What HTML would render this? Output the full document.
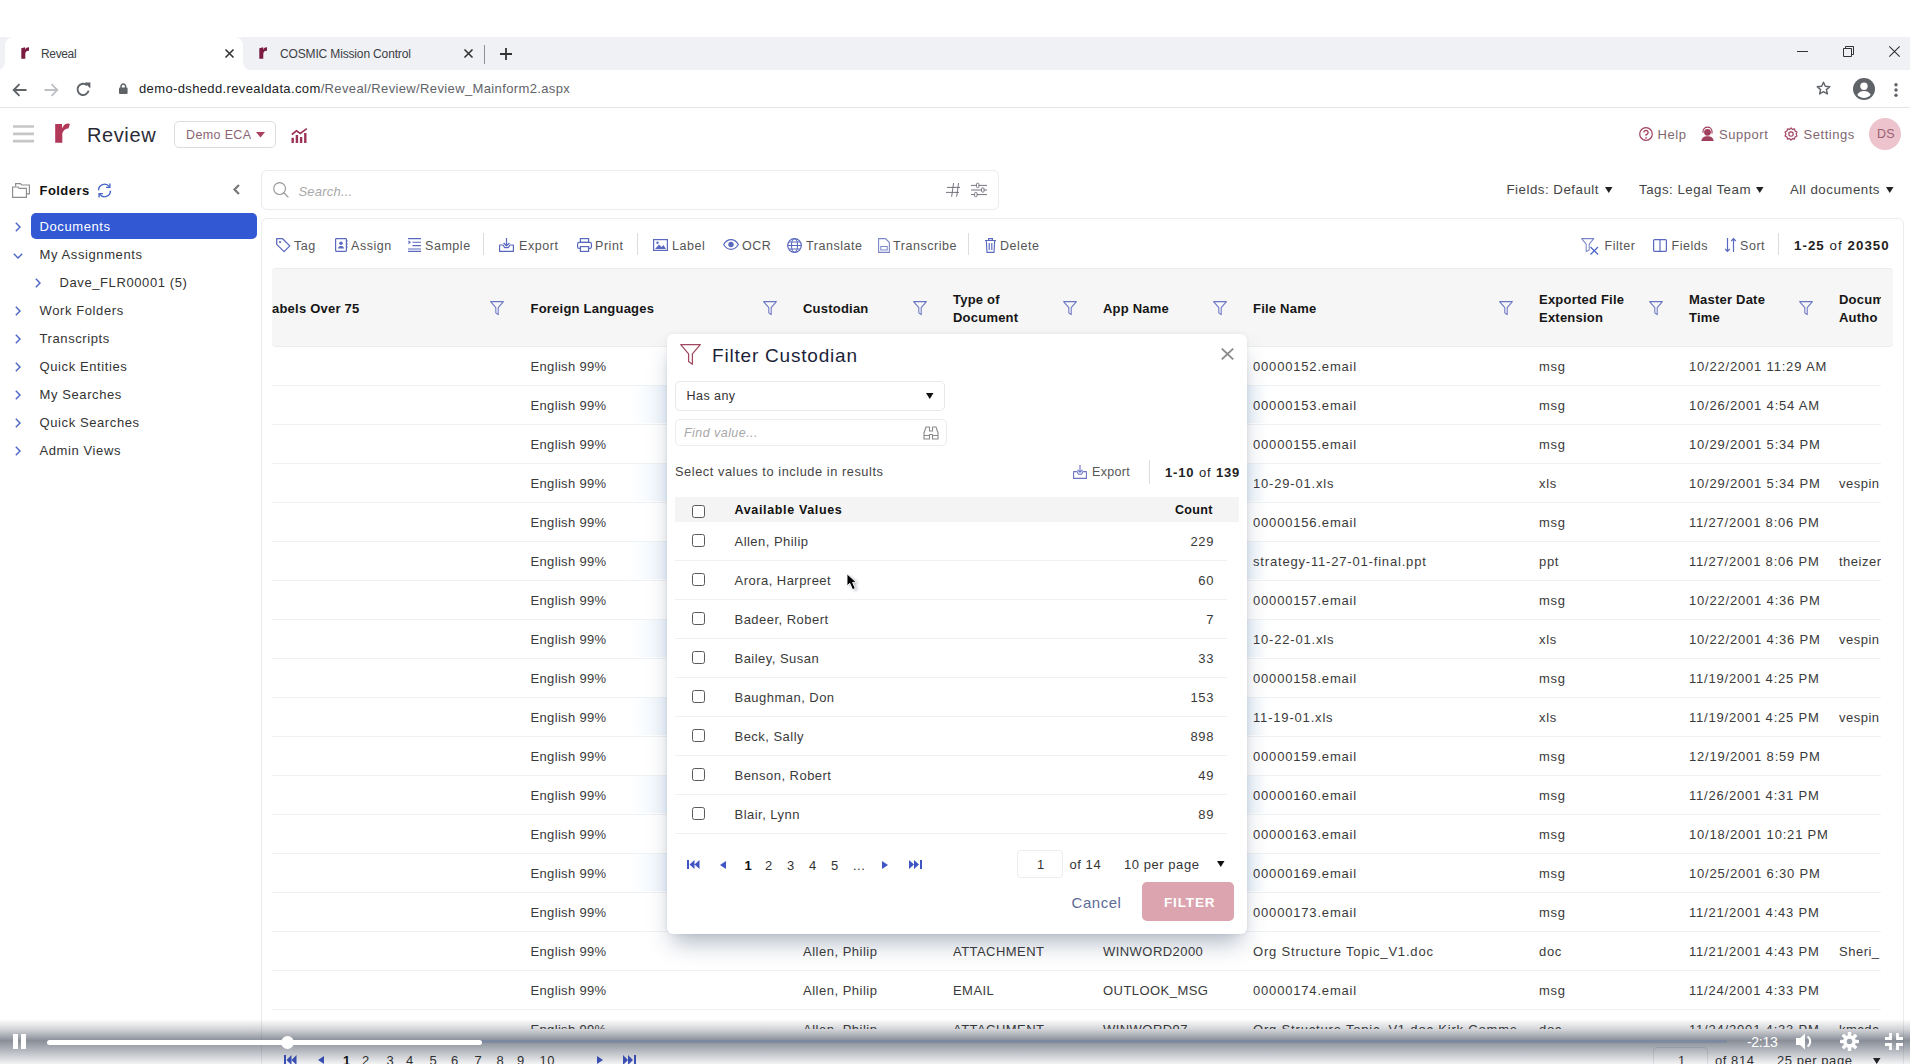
<!DOCTYPE html>
<html><head><meta charset="utf-8">
<style>
*{box-sizing:border-box;margin:0;padding:0}
html,body{width:1910px;height:1064px;overflow:hidden;background:#fff;font-family:"Liberation Sans",sans-serif;color:#333}
.a{position:absolute}
.t{position:absolute;white-space:nowrap;line-height:1}
svg{position:absolute;overflow:visible}
.cb{position:absolute;width:13px;height:13px;border:1px solid #5a5a5a;border-radius:2.5px;background:#fff}
</style></head><body>

<div class="a" style="left:0px;top:37px;width:1910px;height:33px;background:#f0f1f5"></div>
<div class="a" style="left:5px;top:37px;width:238px;height:34px;background:#fff;border-radius:8px 8px 0 0"></div>
<div class="a" style="left:-3px;top:62px;width:8px;height:8px;background:#fff"></div>
<div class="a" style="left:-3px;top:54px;width:8px;height:16px;background:#f0f1f5;border-radius:0 0 8px 0"></div>
<div class="a" style="left:243px;top:62px;width:8px;height:8px;background:#fff"></div>
<div class="a" style="left:243px;top:54px;width:8px;height:16px;background:#f0f1f5;border-radius:0 0 0 8px"></div>
<svg style="left:21px;top:47px" width="8" height="12" viewBox="0 0 8 12"><path d="M0.3 1.2L4.2 0.2V2.8C5 0.9 6.3 0.2 8 0.4V3.9C5.9 3.6 4.5 4.6 4.3 7V11.8H0.3Z" fill="#7b1b42"/></svg>
<div class="t" style="left:41px;top:47.7px;font-size:12px;color:#3c4043;letter-spacing:-0.35px;">Reveal</div>
<svg style="left:225px;top:49px" width="9" height="9" viewBox="0 0 9 9"><path d="M0.5 0.5L8.5 8.5M8.5 0.5L0.5 8.5" stroke="#333" stroke-width="1.6"/></svg>
<svg style="left:259px;top:47px" width="8" height="12" viewBox="0 0 8 12"><path d="M0.3 1.2L4.2 0.2V2.8C5 0.9 6.3 0.2 8 0.4V3.9C5.9 3.6 4.5 4.6 4.3 7V11.8H0.3Z" fill="#7b1b42"/></svg>
<div class="t" style="left:280px;top:47.7px;font-size:12px;color:#3c4043;letter-spacing:-0.15px;">COSMIC Mission Control</div>
<svg style="left:464px;top:49px" width="9" height="9" viewBox="0 0 9 9"><path d="M0.5 0.5L8.5 8.5M8.5 0.5L0.5 8.5" stroke="#333" stroke-width="1.6"/></svg>
<div class="a" style="left:484px;top:45px;width:1px;height:19px;background:#8d9197"></div>
<svg style="left:500px;top:48px" width="12" height="12" viewBox="0 0 12 12"><path d="M6 0V12M0 6H12" stroke="#333" stroke-width="1.8"/></svg>
<svg style="left:1797px;top:51px" width="11" height="1" viewBox="0 0 11 1"><path d="M0 0.5H11" stroke="#333" stroke-width="1"/></svg>
<svg style="left:1843px;top:46px" width="11" height="11" viewBox="0 0 11 11"><path d="M0.5 2.5H8.5V10.5H0.5Z M2.5 2.5V0.5H10.5V8.5H8.5" fill="none" stroke="#333" stroke-width="1"/></svg>
<svg style="left:1889px;top:46px" width="11" height="11" viewBox="0 0 11 11"><path d="M0.3 0.3L10.7 10.7M10.7 0.3L0.3 10.7" stroke="#333" stroke-width="1.1"/></svg>
<div class="a" style="left:0px;top:107px;width:1910px;height:1px;background:#e3e5e8"></div>
<svg style="left:12px;top:83px" width="15" height="14" viewBox="0 0 15 14"><path d="M14.5 7H2M7.5 1.2L1.7 7L7.5 12.8" fill="none" stroke="#5f6368" stroke-width="1.9"/></svg>
<svg style="left:44px;top:83px" width="15" height="14" viewBox="0 0 15 14"><path d="M0.5 7H13M7.5 1.2L13.3 7L7.5 12.8" fill="none" stroke="#bdc1c6" stroke-width="1.9"/></svg>
<svg style="left:76px;top:82px" width="15" height="15" viewBox="0 0 15 15"><path d="M12.6 8.6A5.6 5.6 0 1 1 11 3.3" fill="none" stroke="#5f6368" stroke-width="1.9"/><path d="M8.6 0.6H14.4V6.4Z" fill="#5f6368"/></svg>
<svg style="left:119px;top:83px" width="9" height="11" viewBox="0 0 9 11"><rect x="0" y="4.6" width="8.6" height="6.4" rx="1" fill="#5f6368"/><path d="M2 5V3.3A2.3 2.3 0 0 1 6.6 3.3V5" fill="none" stroke="#5f6368" stroke-width="1.5"/></svg>
<div class="t" style="left:139px;top:82.2px;font-size:13px;color:#5f6368;letter-spacing:0.37px;"><span style="color:#202124">demo-dshedd.revealdata.com</span>/Reveal/Review/Review_Mainform2.aspx</div>
<svg style="left:1816px;top:81px" width="15" height="15" viewBox="0 0 15 15"><path d="M7.5 1.2L9.3 5.3L13.8 5.7L10.4 8.6L11.4 13L7.5 10.7L3.6 13L4.6 8.6L1.2 5.7L5.7 5.3Z" fill="none" stroke="#5f6368" stroke-width="1.4" stroke-linejoin="round"/></svg>
<svg style="left:1853px;top:78px" width="22" height="22" viewBox="0 0 22 22"><circle cx="11" cy="11" r="11" fill="#5f6368"/><circle cx="11" cy="8.2" r="3.7" fill="#fff"/><path d="M4.3 16.8C5.8 13.8 8.3 12.9 11 12.9S16.2 13.8 17.7 16.8A8.7 8.7 0 0 1 4.3 16.8Z" fill="#fff"/></svg>
<svg style="left:1894px;top:83px" width="4" height="14" viewBox="0 0 4 14"><circle cx="2" cy="1.8" r="1.7" fill="#5f6368"/><circle cx="2" cy="7" r="1.7" fill="#5f6368"/><circle cx="2" cy="12.2" r="1.7" fill="#5f6368"/></svg>
<svg style="left:13px;top:125px" width="21" height="18" viewBox="0 0 21 18"><path d="M0 1.5H21M0 8.8H21M0 16.2H21" stroke="#c6c6c6" stroke-width="2.7"/></svg>
<svg style="left:54px;top:123px" width="17" height="20" viewBox="0 0 17 20"><path d="M1.2 1H8V5.5C9.2 2.2 11.5 0.3 14.5 0.4L15.9 1.3L14.4 5.6C11.8 5.7 9.3 7.2 8.3 10.2V19.8H1.2Z" fill="#b2385a"/></svg>
<div class="t" style="left:87px;top:124.6px;font-size:20px;color:#2a2a35;letter-spacing:0.6px;">Review</div>
<div class="a" style="left:174px;top:121px;width:102px;height:27px;border:1px solid #dcdcdc;border-radius:5px"></div>
<div class="t" style="left:186px;top:128.9px;font-size:12.5px;color:#8a6573;letter-spacing:0.37px;">Demo ECA</div>
<svg style="left:256px;top:132px" width="9" height="6" viewBox="0 0 9 6"><path d="M0 0H9L4.5 5.5Z" fill="#a8405f"/></svg>
<svg style="left:291px;top:128px" width="17" height="15" viewBox="0 0 17 15"><path d="M0.8 6.5L5.5 2.8L9.3 5.5L15.8 0.6" fill="none" stroke="#9c3456" stroke-width="1.7"/><rect x="0.5" y="9.8" width="2.4" height="5.2" fill="#9c3456"/><rect x="4.7" y="7" width="2.4" height="8" fill="#9c3456"/><rect x="8.9" y="9" width="2.4" height="6" fill="#9c3456"/><rect x="13.1" y="5" width="2.4" height="10" fill="#9c3456"/></svg>
<svg style="left:1639px;top:127px" width="14" height="14" viewBox="0 0 14 14"><circle cx="7" cy="7" r="6.3" fill="none" stroke="#a0405e" stroke-width="1.2"/><path d="M4.9 5.5A2.1 2.1 0 1 1 7 7.6V8.8" fill="none" stroke="#a0405e" stroke-width="1.2"/><circle cx="7" cy="10.8" r="0.85" fill="#a0405e"/></svg>
<div class="t" style="left:1657.5px;top:128.2px;font-size:13px;color:#7f6770;letter-spacing:0.55px;">Help</div>
<svg style="left:1701px;top:127px" width="13" height="14" viewBox="0 0 13 14"><circle cx="6.5" cy="5.3" r="3.4" fill="#a0405e"/><path d="M2 5.8V4.6A4.5 4.5 0 0 1 11 4.6V6.6" fill="none" stroke="#a0405e" stroke-width="1.2"/><path d="M0.3 14C0.8 10.3 3.2 9.2 6.5 9.2S12.2 10.3 12.7 14Z" fill="#a0405e"/></svg>
<div class="t" style="left:1719px;top:128.2px;font-size:13px;color:#7f6770;letter-spacing:0.55px;">Support</div>
<svg style="left:1784px;top:127px" width="14" height="14" viewBox="0 0 14 14"><path d="M7 0.8L8.4 2.4L10.5 1.9L11 4L13 5L12.1 7L13 9L11 10L10.5 12.1L8.4 11.6L7 13.2L5.6 11.6L3.5 12.1L3 10L1 9L1.9 7L1 5L3 4L3.5 1.9L5.6 2.4Z" fill="none" stroke="#a0405e" stroke-width="1.15" stroke-linejoin="round"/><circle cx="7" cy="7" r="2.2" fill="none" stroke="#a0405e" stroke-width="1.15"/></svg>
<div class="t" style="left:1803.5px;top:128.2px;font-size:13px;color:#7f6770;letter-spacing:0.55px;">Settings</div>
<div class="a" style="left:1869px;top:118px;width:32px;height:32px;border-radius:50%;background:#edc3cd"></div>
<div class="t" style="left:1877px;top:128.4px;font-size:12.5px;color:#9a6070;letter-spacing:0.3px;">DS</div>
<svg style="left:12px;top:183px" width="18" height="15" viewBox="0 0 18 15"><path d="M3.6 3.4V0.6H8.4L9.7 2H17.4V10.8H14.6" fill="none" stroke="#8c8c8c" stroke-width="1.15"/><path d="M0.6 4H6L7.2 5.4H14.4V14.4H0.6Z" fill="none" stroke="#8c8c8c" stroke-width="1.15"/></svg>
<div class="t" style="left:39.5px;top:183.6px;font-size:13px;color:#111;letter-spacing:0.45px;font-weight:700;">Folders</div>
<svg style="left:97px;top:183px" width="15" height="15" viewBox="0 0 15 15"><path d="M1.6 7.2A5.9 5.9 0 0 1 12.2 3.6M13.4 7.8A5.9 5.9 0 0 1 2.8 11.4" fill="none" stroke="#4462c8" stroke-width="1.35"/><path d="M12.9 0.6V4.4H9.1M2.1 14.4V10.6H5.9" fill="none" stroke="#4462c8" stroke-width="1.35"/></svg>
<svg style="left:233px;top:184px" width="7" height="11" viewBox="0 0 7 11"><path d="M6 1L1.5 5.5L6 10" fill="none" stroke="#777" stroke-width="2.2"/></svg>
<div class="a" style="left:31px;top:213px;width:226px;height:26px;background:#3358d4;border-radius:5px"></div>
<svg style="left:15px;top:221.9px" width="6" height="10" viewBox="0 0 6 10"><path d="M0.8 0.8L5 5L0.8 9.2" fill="none" stroke="#4a64c4" stroke-width="1.4"/></svg>
<div class="t" style="left:39.5px;top:219.8px;font-size:13px;color:#fff;letter-spacing:0.6px;">Documents</div>
<svg style="left:13px;top:252.89999999999998px" width="10" height="6" viewBox="0 0 10 6"><path d="M0.8 0.8L5 5L9.2 0.8" fill="none" stroke="#4a64c4" stroke-width="1.4"/></svg>
<div class="t" style="left:39.5px;top:247.8px;font-size:13px;color:#333;letter-spacing:0.6px;">My Assignments</div>
<svg style="left:35px;top:277.9px" width="6" height="10" viewBox="0 0 6 10"><path d="M0.8 0.8L5 5L0.8 9.2" fill="none" stroke="#4a64c4" stroke-width="1.4"/></svg>
<div class="t" style="left:59.5px;top:275.8px;font-size:13px;color:#333;letter-spacing:0.6px;">Dave_FLR00001 (5)</div>
<svg style="left:15px;top:305.9px" width="6" height="10" viewBox="0 0 6 10"><path d="M0.8 0.8L5 5L0.8 9.2" fill="none" stroke="#4a64c4" stroke-width="1.4"/></svg>
<div class="t" style="left:39.5px;top:303.8px;font-size:13px;color:#333;letter-spacing:0.6px;">Work Folders</div>
<svg style="left:15px;top:333.9px" width="6" height="10" viewBox="0 0 6 10"><path d="M0.8 0.8L5 5L0.8 9.2" fill="none" stroke="#4a64c4" stroke-width="1.4"/></svg>
<div class="t" style="left:39.5px;top:331.8px;font-size:13px;color:#333;letter-spacing:0.6px;">Transcripts</div>
<svg style="left:15px;top:361.9px" width="6" height="10" viewBox="0 0 6 10"><path d="M0.8 0.8L5 5L0.8 9.2" fill="none" stroke="#4a64c4" stroke-width="1.4"/></svg>
<div class="t" style="left:39.5px;top:359.8px;font-size:13px;color:#333;letter-spacing:0.6px;">Quick Entities</div>
<svg style="left:15px;top:389.9px" width="6" height="10" viewBox="0 0 6 10"><path d="M0.8 0.8L5 5L0.8 9.2" fill="none" stroke="#4a64c4" stroke-width="1.4"/></svg>
<div class="t" style="left:39.5px;top:387.8px;font-size:13px;color:#333;letter-spacing:0.6px;">My Searches</div>
<svg style="left:15px;top:417.9px" width="6" height="10" viewBox="0 0 6 10"><path d="M0.8 0.8L5 5L0.8 9.2" fill="none" stroke="#4a64c4" stroke-width="1.4"/></svg>
<div class="t" style="left:39.5px;top:415.8px;font-size:13px;color:#333;letter-spacing:0.6px;">Quick Searches</div>
<svg style="left:15px;top:445.9px" width="6" height="10" viewBox="0 0 6 10"><path d="M0.8 0.8L5 5L0.8 9.2" fill="none" stroke="#4a64c4" stroke-width="1.4"/></svg>
<div class="t" style="left:39.5px;top:443.8px;font-size:13px;color:#333;letter-spacing:0.6px;">Admin Views</div>
<div class="a" style="left:261px;top:170px;width:738px;height:40px;border:1px solid #ececec;border-radius:6px"></div>
<svg style="left:273px;top:182px" width="16" height="16" viewBox="0 0 16 16"><circle cx="6.6" cy="6.6" r="5.9" fill="none" stroke="#9a9a9a" stroke-width="1.2"/><path d="M10.8 10.8L15.4 15.4" stroke="#9a9a9a" stroke-width="1.3"/></svg>
<div class="t" style="left:298.5px;top:184.9px;font-size:13px;color:#a9a9a9;letter-spacing:0.2px;font-style:italic;">Search...</div>
<svg style="left:940px;top:180px" width="25" height="20" viewBox="0 0 25 20"><path d="M11.4 3V16.8M16.4 3V16.8" stroke="#6d6d78" stroke-width="0.9" transform="skewX(-8) translate(2.6 0)"/><path d="M7 7.4H20M6 12.4H19" stroke="#6d6d78" stroke-width="0.95"/></svg>
<svg style="left:970px;top:180px" width="20" height="20" viewBox="0 0 20 20"><path d="M1 5.4H17M1 10H17M1 14.6H17" stroke="#6d6d78" stroke-width="0.95"/><rect x="6.5" y="3.2" width="2.4" height="4.4" rx="1" fill="#fff" stroke="#6d6d78" stroke-width="0.9"/><rect x="11.6" y="7.8" width="2.4" height="4.4" rx="1" fill="#fff" stroke="#6d6d78" stroke-width="0.9"/><rect x="4.6" y="12.4" width="2.4" height="4.4" rx="1" fill="#fff" stroke="#6d6d78" stroke-width="0.9"/></svg>
<div class="t" style="left:1506.5px;top:182.9px;font-size:13.3px;color:#444;letter-spacing:0.5px;">Fields: Default</div>
<svg style="left:1605px;top:187px" width="8" height="6" viewBox="0 0 8 6"><path d="M0 0H7.5L3.75 6Z" fill="#222"/></svg>
<div class="t" style="left:1639px;top:182.9px;font-size:13.3px;color:#444;letter-spacing:0.5px;">Tags: Legal Team</div>
<svg style="left:1756px;top:187px" width="8" height="6" viewBox="0 0 8 6"><path d="M0 0H7.5L3.75 6Z" fill="#222"/></svg>
<div class="t" style="left:1790px;top:182.9px;font-size:13.3px;color:#444;letter-spacing:0.5px;">All documents</div>
<svg style="left:1885.5px;top:187px" width="8" height="6" viewBox="0 0 8 6"><path d="M0 0H7.5L3.75 6Z" fill="#222"/></svg>
<div class="a" style="left:261px;top:218px;width:1643px;height:900px;border:1px solid #ececec;border-radius:6px"></div>
<svg style="left:276px;top:238px" width="15" height="14" viewBox="0 0 15 14"><path d="M0.7 0.7H6.6L13.8 7.9L8.1 13.6L0.7 6.4Z" fill="none" stroke="#5a68bf" stroke-width="1.25" stroke-linejoin="round"/><circle cx="4" cy="4" r="1.1" fill="#5a68bf"/></svg>
<div class="t" style="left:294px;top:240.2px;font-size:12.5px;color:#555;letter-spacing:0.55px;">Tag</div>
<svg style="left:335px;top:238px" width="13" height="14" viewBox="0 0 13 14"><rect x="0.6" y="0.6" width="10.8" height="12.8" rx="0.8" fill="none" stroke="#5a68bf" stroke-width="1.2"/><circle cx="6" cy="5.2" r="1.8" fill="#5a68bf"/><path d="M2.9 10.6C3.4 8.6 4.6 8 6 8S8.6 8.6 9.1 10.6Z" fill="#5a68bf"/><path d="M11.6 3H12.8M11.6 6H12.8M11.6 9H12.8" stroke="#5a68bf" stroke-width="1.1"/></svg>
<div class="t" style="left:351px;top:240.2px;font-size:12.5px;color:#555;letter-spacing:0.55px;">Assign</div>
<svg style="left:408px;top:238px" width="14" height="14" viewBox="0 0 14 14"><path d="M0.5 2.2L3 4.2L0.5 6.2Z" fill="#5a68bf"/><path d="M0 0.6H13M4.5 4.2H13M4.5 7.6H13M0 11H13M0 13.4H13" stroke="#5a68bf" stroke-width="1.1"/></svg>
<div class="t" style="left:425px;top:240.2px;font-size:12.5px;color:#555;letter-spacing:0.55px;">Sample</div>
<div class="a" style="left:483px;top:233px;width:1px;height:22px;background:#ddd"></div>
<svg style="left:499px;top:238px" width="15" height="14" viewBox="0 0 15 14"><path d="M0.6 7V13.4H14.4V7H11L9.3 9.6H5.7L4 7Z" fill="none" stroke="#5a68bf" stroke-width="1.2" stroke-linejoin="round"/><path d="M7.5 0V7.8M4.6 5L7.5 7.8L10.4 5" fill="none" stroke="#5a68bf" stroke-width="1.2"/></svg>
<div class="t" style="left:519px;top:240.2px;font-size:12.5px;color:#555;letter-spacing:0.55px;">Export</div>
<svg style="left:577px;top:238px" width="15" height="14" viewBox="0 0 15 14"><rect x="3.4" y="0.6" width="8.2" height="3.8" fill="none" stroke="#5a68bf" stroke-width="1.2"/><rect x="0.6" y="4.4" width="13.8" height="6" rx="1.5" fill="none" stroke="#5a68bf" stroke-width="1.2"/><rect x="3.4" y="8.6" width="8.2" height="4.8" fill="#fff" stroke="#5a68bf" stroke-width="1.2"/></svg>
<div class="t" style="left:595px;top:240.2px;font-size:12.5px;color:#555;letter-spacing:0.55px;">Print</div>
<div class="a" style="left:637px;top:233px;width:1px;height:22px;background:#ddd"></div>
<svg style="left:653px;top:239px" width="15" height="12" viewBox="0 0 15 12"><rect x="0.6" y="0.6" width="13.8" height="10.8" fill="none" stroke="#5a68bf" stroke-width="1.2"/><path d="M2 10L6 5.5L8.5 8L10.5 6L13 10Z" fill="#5a68bf"/><circle cx="4.5" cy="3.8" r="1.2" fill="#5a68bf"/></svg>
<div class="t" style="left:672px;top:240.2px;font-size:12.5px;color:#555;letter-spacing:0.55px;">Label</div>
<svg style="left:723px;top:239px" width="16" height="11" viewBox="0 0 16 11"><path d="M0.7 5.5C3 1.5 5.5 0.7 8 0.7S13 1.5 15.3 5.5C13 9.5 10.5 10.3 8 10.3S3 9.5 0.7 5.5Z" fill="none" stroke="#5a68bf" stroke-width="1.2"/><circle cx="8" cy="5.5" r="2.7" fill="#5a68bf"/></svg>
<div class="t" style="left:742px;top:240.2px;font-size:12.5px;color:#555;letter-spacing:0.55px;">OCR</div>
<svg style="left:787px;top:238px" width="15" height="15" viewBox="0 0 15 15"><circle cx="7.5" cy="7.5" r="6.8" fill="none" stroke="#5a68bf" stroke-width="1.2"/><ellipse cx="7.5" cy="7.5" rx="3" ry="6.8" fill="none" stroke="#5a68bf" stroke-width="1.1"/><path d="M0.7 7.5H14.3M1.8 4H13.2M1.8 11H13.2" stroke="#5a68bf" stroke-width="1"/></svg>
<div class="t" style="left:806px;top:240.2px;font-size:12.5px;color:#555;letter-spacing:0.55px;">Translate</div>
<svg style="left:878px;top:238px" width="12" height="15" viewBox="0 0 12 15"><path d="M0.6 0.6H7.5L11.4 4.5V14.4H0.6Z" fill="none" stroke="#7b86c8" stroke-width="1.1"/><rect x="2.8" y="8.5" width="6.4" height="3.5" fill="none" stroke="#7b86c8" stroke-width="1"/></svg>
<div class="t" style="left:893px;top:240.2px;font-size:12.5px;color:#555;letter-spacing:0.55px;">Transcribe</div>
<div class="a" style="left:968px;top:233px;width:1px;height:22px;background:#ddd"></div>
<svg style="left:985px;top:238px" width="11" height="15" viewBox="0 0 11 15"><path d="M0 2.5H11M3.6 2.5V0.6H7.4V2.5M1.3 2.5L2 14.4H9L9.7 2.5M4.2 5V12M6.8 5V12" fill="none" stroke="#5a68bf" stroke-width="1.15"/></svg>
<div class="t" style="left:1000px;top:240.2px;font-size:12.5px;color:#555;letter-spacing:0.55px;">Delete</div>
<svg style="left:1581px;top:238px" width="19" height="17" viewBox="0 0 19 17"><path d="M0.6 0.6H12.8L8.2 6.2V12L5.2 13.6V6.2Z" fill="none" stroke="#7b86c8" stroke-width="1.05" stroke-linejoin="round"/><path d="M9.5 9L17 16.5M17 9L9.5 16.5" stroke="#4462c8" stroke-width="1.15"/></svg>
<div class="t" style="left:1604.5px;top:240.2px;font-size:12.5px;color:#555;letter-spacing:0.55px;">Filter</div>
<svg style="left:1653px;top:239px" width="14" height="13" viewBox="0 0 14 13"><rect x="0.6" y="0.6" width="12.8" height="11.8" rx="1" fill="none" stroke="#5a68bf" stroke-width="1.2"/><path d="M7 0.6V12.4" stroke="#5a68bf" stroke-width="1.2"/></svg>
<div class="t" style="left:1671.5px;top:240.2px;font-size:12.5px;color:#555;letter-spacing:0.55px;">Fields</div>
<svg style="left:1725px;top:238px" width="11" height="14" viewBox="0 0 11 14"><path d="M2.5 0V13.4M0.2 11L2.5 13.4L4.8 11M8.5 14V0.6M6.2 3L8.5 0.6L10.8 3" fill="none" stroke="#5a68bf" stroke-width="1.2"/></svg>
<div class="t" style="left:1740px;top:240.2px;font-size:12.5px;color:#555;letter-spacing:0.55px;">Sort</div>
<div class="a" style="left:1778px;top:233px;width:1px;height:22px;background:#ddd"></div>
<div class="t" style="left:1794px;top:238.8px;font-size:13.3px;color:#222;letter-spacing:1.05px;"><b>1-25</b> of <b>20350</b></div>
<div class="a" style="left:272px;top:268px;width:1621px;height:78px;background:#f6f6f6;border-radius:4px;border-top:1px solid #ebebeb;box-shadow:0 1px 0 #ededed"></div>
<div class="t" style="left:272px;top:301.8px;font-size:13px;color:#151515;letter-spacing:0.22px;font-weight:700;">abels Over 75</div>
<svg style="left:490px;top:301px" width="14" height="14" viewBox="0 0 14 14"><path d="M0.6 0.6H13.4L8.2 6.6V13.6L5.8 11.8V6.6Z" fill="none" stroke="#6a76c4" stroke-width="1.05" stroke-linejoin="round"/></svg>
<div class="t" style="left:530.5px;top:301.8px;font-size:13px;color:#151515;letter-spacing:0.22px;font-weight:700;">Foreign Languages</div>
<svg style="left:763px;top:301px" width="14" height="14" viewBox="0 0 14 14"><path d="M0.6 0.6H13.4L8.2 6.6V13.6L5.8 11.8V6.6Z" fill="none" stroke="#6a76c4" stroke-width="1.05" stroke-linejoin="round"/></svg>
<div class="t" style="left:803px;top:301.8px;font-size:13px;color:#151515;letter-spacing:0.22px;font-weight:700;">Custodian</div>
<svg style="left:913px;top:301px" width="14" height="14" viewBox="0 0 14 14"><path d="M0.6 0.6H13.4L8.2 6.6V13.6L5.8 11.8V6.6Z" fill="none" stroke="#6a76c4" stroke-width="1.05" stroke-linejoin="round"/></svg>
<div class="t" style="left:953px;top:292.8px;font-size:13px;color:#151515;letter-spacing:0.22px;font-weight:700;">Type of</div>
<div class="t" style="left:953px;top:310.8px;font-size:13px;color:#151515;letter-spacing:0.22px;font-weight:700;">Document</div>
<svg style="left:1063px;top:301px" width="14" height="14" viewBox="0 0 14 14"><path d="M0.6 0.6H13.4L8.2 6.6V13.6L5.8 11.8V6.6Z" fill="none" stroke="#6a76c4" stroke-width="1.05" stroke-linejoin="round"/></svg>
<div class="t" style="left:1103px;top:301.8px;font-size:13px;color:#151515;letter-spacing:0.22px;font-weight:700;">App Name</div>
<svg style="left:1213px;top:301px" width="14" height="14" viewBox="0 0 14 14"><path d="M0.6 0.6H13.4L8.2 6.6V13.6L5.8 11.8V6.6Z" fill="none" stroke="#6a76c4" stroke-width="1.05" stroke-linejoin="round"/></svg>
<div class="t" style="left:1253px;top:301.8px;font-size:13px;color:#151515;letter-spacing:0.22px;font-weight:700;">File Name</div>
<svg style="left:1499px;top:301px" width="14" height="14" viewBox="0 0 14 14"><path d="M0.6 0.6H13.4L8.2 6.6V13.6L5.8 11.8V6.6Z" fill="none" stroke="#6a76c4" stroke-width="1.05" stroke-linejoin="round"/></svg>
<div class="t" style="left:1539px;top:292.8px;font-size:13px;color:#151515;letter-spacing:0.22px;font-weight:700;">Exported File</div>
<div class="t" style="left:1539px;top:310.8px;font-size:13px;color:#151515;letter-spacing:0.22px;font-weight:700;">Extension</div>
<svg style="left:1649px;top:301px" width="14" height="14" viewBox="0 0 14 14"><path d="M0.6 0.6H13.4L8.2 6.6V13.6L5.8 11.8V6.6Z" fill="none" stroke="#6a76c4" stroke-width="1.05" stroke-linejoin="round"/></svg>
<div class="t" style="left:1689px;top:292.8px;font-size:13px;color:#151515;letter-spacing:0.22px;font-weight:700;">Master Date</div>
<div class="t" style="left:1689px;top:310.8px;font-size:13px;color:#151515;letter-spacing:0.22px;font-weight:700;">Time</div>
<svg style="left:1799px;top:301px" width="14" height="14" viewBox="0 0 14 14"><path d="M0.6 0.6H13.4L8.2 6.6V13.6L5.8 11.8V6.6Z" fill="none" stroke="#6a76c4" stroke-width="1.05" stroke-linejoin="round"/></svg>
<div class="t" style="left:1839px;top:292.8px;font-size:13px;color:#151515;letter-spacing:0.22px;font-weight:700;width:42px;overflow:hidden;">Docum</div>
<div class="t" style="left:1839px;top:310.8px;font-size:13px;color:#151515;letter-spacing:0.22px;font-weight:700;width:42px;overflow:hidden;">Autho</div>
<div class="a" style="left:630px;top:385px;width:37px;height:38px;background:linear-gradient(to right,rgba(215,228,242,0) 0%,rgba(232,242,252,0.7) 100%)"></div>
<div class="a" style="left:1247px;top:385px;width:22px;height:38px;background:linear-gradient(to left,rgba(215,228,242,0) 0%,rgba(232,242,252,0.7) 100%)"></div>
<div class="a" style="left:630px;top:463px;width:37px;height:38px;background:linear-gradient(to right,rgba(215,228,242,0) 0%,rgba(232,242,252,0.7) 100%)"></div>
<div class="a" style="left:1247px;top:463px;width:22px;height:38px;background:linear-gradient(to left,rgba(215,228,242,0) 0%,rgba(232,242,252,0.7) 100%)"></div>
<div class="a" style="left:630px;top:541px;width:37px;height:38px;background:linear-gradient(to right,rgba(215,228,242,0) 0%,rgba(232,242,252,0.7) 100%)"></div>
<div class="a" style="left:1247px;top:541px;width:22px;height:38px;background:linear-gradient(to left,rgba(215,228,242,0) 0%,rgba(232,242,252,0.7) 100%)"></div>
<div class="a" style="left:630px;top:619px;width:37px;height:38px;background:linear-gradient(to right,rgba(215,228,242,0) 0%,rgba(232,242,252,0.7) 100%)"></div>
<div class="a" style="left:1247px;top:619px;width:22px;height:38px;background:linear-gradient(to left,rgba(215,228,242,0) 0%,rgba(232,242,252,0.7) 100%)"></div>
<div class="a" style="left:630px;top:697px;width:37px;height:38px;background:linear-gradient(to right,rgba(215,228,242,0) 0%,rgba(232,242,252,0.7) 100%)"></div>
<div class="a" style="left:1247px;top:697px;width:22px;height:38px;background:linear-gradient(to left,rgba(215,228,242,0) 0%,rgba(232,242,252,0.7) 100%)"></div>
<div class="a" style="left:630px;top:775px;width:37px;height:38px;background:linear-gradient(to right,rgba(215,228,242,0) 0%,rgba(232,242,252,0.7) 100%)"></div>
<div class="a" style="left:1247px;top:775px;width:22px;height:38px;background:linear-gradient(to left,rgba(215,228,242,0) 0%,rgba(232,242,252,0.7) 100%)"></div>
<div class="a" style="left:630px;top:853px;width:37px;height:38px;background:linear-gradient(to right,rgba(215,228,242,0) 0%,rgba(232,242,252,0.7) 100%)"></div>
<div class="a" style="left:1247px;top:853px;width:22px;height:38px;background:linear-gradient(to left,rgba(215,228,242,0) 0%,rgba(232,242,252,0.7) 100%)"></div>
<div class="a" style="left:272px;top:346px;width:1621px;height:683px;overflow:hidden">
<div class="a" style="left:0px;top:39px;width:1609px;height:1px;background:#eff2f4"></div>
<div class="t" style="left:258.5px;top:13.6px;font-size:13px;color:#3a3a3a;letter-spacing:0.34px;">English 99%</div>
<div class="t" style="left:981px;top:13.6px;font-size:13px;color:#3a3a3a;letter-spacing:0.82px;width:265px;overflow:hidden;padding-bottom:4px;">00000152.email</div>
<div class="t" style="left:1267px;top:13.6px;font-size:13px;color:#3a3a3a;letter-spacing:0.68px;">msg</div>
<div class="t" style="left:1417px;top:13.6px;font-size:13px;color:#3a3a3a;letter-spacing:0.81px;">10/22/2001 11:29 AM</div>
<div class="a" style="left:0px;top:78px;width:1609px;height:1px;background:#eff2f4"></div>
<div class="t" style="left:258.5px;top:52.6px;font-size:13px;color:#3a3a3a;letter-spacing:0.34px;">English 99%</div>
<div class="t" style="left:981px;top:52.6px;font-size:13px;color:#3a3a3a;letter-spacing:0.82px;width:265px;overflow:hidden;padding-bottom:4px;">00000153.email</div>
<div class="t" style="left:1267px;top:52.6px;font-size:13px;color:#3a3a3a;letter-spacing:0.68px;">msg</div>
<div class="t" style="left:1417px;top:52.6px;font-size:13px;color:#3a3a3a;letter-spacing:0.81px;">10/26/2001 4:54 AM</div>
<div class="a" style="left:0px;top:117px;width:1609px;height:1px;background:#eff2f4"></div>
<div class="t" style="left:258.5px;top:91.6px;font-size:13px;color:#3a3a3a;letter-spacing:0.34px;">English 99%</div>
<div class="t" style="left:981px;top:91.6px;font-size:13px;color:#3a3a3a;letter-spacing:0.82px;width:265px;overflow:hidden;padding-bottom:4px;">00000155.email</div>
<div class="t" style="left:1267px;top:91.6px;font-size:13px;color:#3a3a3a;letter-spacing:0.68px;">msg</div>
<div class="t" style="left:1417px;top:91.6px;font-size:13px;color:#3a3a3a;letter-spacing:0.81px;">10/29/2001 5:34 PM</div>
<div class="a" style="left:0px;top:156px;width:1609px;height:1px;background:#eff2f4"></div>
<div class="t" style="left:258.5px;top:130.6px;font-size:13px;color:#3a3a3a;letter-spacing:0.34px;">English 99%</div>
<div class="t" style="left:981px;top:130.6px;font-size:13px;color:#3a3a3a;letter-spacing:0.82px;width:265px;overflow:hidden;padding-bottom:4px;">10-29-01.xls</div>
<div class="t" style="left:1267px;top:130.6px;font-size:13px;color:#3a3a3a;letter-spacing:0.68px;">xls</div>
<div class="t" style="left:1417px;top:130.6px;font-size:13px;color:#3a3a3a;letter-spacing:0.81px;">10/29/2001 5:34 PM</div>
<div class="t" style="left:1567px;top:130.6px;font-size:13px;color:#3a3a3a;letter-spacing:0.5px;width:42px;overflow:hidden;padding-bottom:4px;">vespin</div>
<div class="a" style="left:0px;top:195px;width:1609px;height:1px;background:#eff2f4"></div>
<div class="t" style="left:258.5px;top:169.7px;font-size:13px;color:#3a3a3a;letter-spacing:0.34px;">English 99%</div>
<div class="t" style="left:981px;top:169.7px;font-size:13px;color:#3a3a3a;letter-spacing:0.82px;width:265px;overflow:hidden;padding-bottom:4px;">00000156.email</div>
<div class="t" style="left:1267px;top:169.7px;font-size:13px;color:#3a3a3a;letter-spacing:0.68px;">msg</div>
<div class="t" style="left:1417px;top:169.7px;font-size:13px;color:#3a3a3a;letter-spacing:0.81px;">11/27/2001 8:06 PM</div>
<div class="a" style="left:0px;top:234px;width:1609px;height:1px;background:#eff2f4"></div>
<div class="t" style="left:258.5px;top:208.7px;font-size:13px;color:#3a3a3a;letter-spacing:0.34px;">English 99%</div>
<div class="t" style="left:981px;top:208.7px;font-size:13px;color:#3a3a3a;letter-spacing:0.82px;width:265px;overflow:hidden;padding-bottom:4px;">strategy-11-27-01-final.ppt</div>
<div class="t" style="left:1267px;top:208.7px;font-size:13px;color:#3a3a3a;letter-spacing:0.68px;">ppt</div>
<div class="t" style="left:1417px;top:208.7px;font-size:13px;color:#3a3a3a;letter-spacing:0.81px;">11/27/2001 8:06 PM</div>
<div class="t" style="left:1567px;top:208.7px;font-size:13px;color:#3a3a3a;letter-spacing:0.5px;width:42px;overflow:hidden;padding-bottom:4px;">theizer</div>
<div class="a" style="left:0px;top:273px;width:1609px;height:1px;background:#eff2f4"></div>
<div class="t" style="left:258.5px;top:247.7px;font-size:13px;color:#3a3a3a;letter-spacing:0.34px;">English 99%</div>
<div class="t" style="left:981px;top:247.7px;font-size:13px;color:#3a3a3a;letter-spacing:0.82px;width:265px;overflow:hidden;padding-bottom:4px;">00000157.email</div>
<div class="t" style="left:1267px;top:247.7px;font-size:13px;color:#3a3a3a;letter-spacing:0.68px;">msg</div>
<div class="t" style="left:1417px;top:247.7px;font-size:13px;color:#3a3a3a;letter-spacing:0.81px;">10/22/2001 4:36 PM</div>
<div class="a" style="left:0px;top:312px;width:1609px;height:1px;background:#eff2f4"></div>
<div class="t" style="left:258.5px;top:286.7px;font-size:13px;color:#3a3a3a;letter-spacing:0.34px;">English 99%</div>
<div class="t" style="left:981px;top:286.7px;font-size:13px;color:#3a3a3a;letter-spacing:0.82px;width:265px;overflow:hidden;padding-bottom:4px;">10-22-01.xls</div>
<div class="t" style="left:1267px;top:286.7px;font-size:13px;color:#3a3a3a;letter-spacing:0.68px;">xls</div>
<div class="t" style="left:1417px;top:286.7px;font-size:13px;color:#3a3a3a;letter-spacing:0.81px;">10/22/2001 4:36 PM</div>
<div class="t" style="left:1567px;top:286.7px;font-size:13px;color:#3a3a3a;letter-spacing:0.5px;width:42px;overflow:hidden;padding-bottom:4px;">vespin</div>
<div class="a" style="left:0px;top:351px;width:1609px;height:1px;background:#eff2f4"></div>
<div class="t" style="left:258.5px;top:325.7px;font-size:13px;color:#3a3a3a;letter-spacing:0.34px;">English 99%</div>
<div class="t" style="left:981px;top:325.7px;font-size:13px;color:#3a3a3a;letter-spacing:0.82px;width:265px;overflow:hidden;padding-bottom:4px;">00000158.email</div>
<div class="t" style="left:1267px;top:325.7px;font-size:13px;color:#3a3a3a;letter-spacing:0.68px;">msg</div>
<div class="t" style="left:1417px;top:325.7px;font-size:13px;color:#3a3a3a;letter-spacing:0.81px;">11/19/2001 4:25 PM</div>
<div class="a" style="left:0px;top:390px;width:1609px;height:1px;background:#eff2f4"></div>
<div class="t" style="left:258.5px;top:364.7px;font-size:13px;color:#3a3a3a;letter-spacing:0.34px;">English 99%</div>
<div class="t" style="left:981px;top:364.7px;font-size:13px;color:#3a3a3a;letter-spacing:0.82px;width:265px;overflow:hidden;padding-bottom:4px;">11-19-01.xls</div>
<div class="t" style="left:1267px;top:364.7px;font-size:13px;color:#3a3a3a;letter-spacing:0.68px;">xls</div>
<div class="t" style="left:1417px;top:364.7px;font-size:13px;color:#3a3a3a;letter-spacing:0.81px;">11/19/2001 4:25 PM</div>
<div class="t" style="left:1567px;top:364.7px;font-size:13px;color:#3a3a3a;letter-spacing:0.5px;width:42px;overflow:hidden;padding-bottom:4px;">vespin</div>
<div class="a" style="left:0px;top:429px;width:1609px;height:1px;background:#eff2f4"></div>
<div class="t" style="left:258.5px;top:403.7px;font-size:13px;color:#3a3a3a;letter-spacing:0.34px;">English 99%</div>
<div class="t" style="left:981px;top:403.7px;font-size:13px;color:#3a3a3a;letter-spacing:0.82px;width:265px;overflow:hidden;padding-bottom:4px;">00000159.email</div>
<div class="t" style="left:1267px;top:403.7px;font-size:13px;color:#3a3a3a;letter-spacing:0.68px;">msg</div>
<div class="t" style="left:1417px;top:403.7px;font-size:13px;color:#3a3a3a;letter-spacing:0.81px;">12/19/2001 8:59 PM</div>
<div class="a" style="left:0px;top:468px;width:1609px;height:1px;background:#eff2f4"></div>
<div class="t" style="left:258.5px;top:442.7px;font-size:13px;color:#3a3a3a;letter-spacing:0.34px;">English 99%</div>
<div class="t" style="left:981px;top:442.7px;font-size:13px;color:#3a3a3a;letter-spacing:0.82px;width:265px;overflow:hidden;padding-bottom:4px;">00000160.email</div>
<div class="t" style="left:1267px;top:442.7px;font-size:13px;color:#3a3a3a;letter-spacing:0.68px;">msg</div>
<div class="t" style="left:1417px;top:442.7px;font-size:13px;color:#3a3a3a;letter-spacing:0.81px;">11/26/2001 4:31 PM</div>
<div class="a" style="left:0px;top:507px;width:1609px;height:1px;background:#eff2f4"></div>
<div class="t" style="left:258.5px;top:481.7px;font-size:13px;color:#3a3a3a;letter-spacing:0.34px;">English 99%</div>
<div class="t" style="left:981px;top:481.7px;font-size:13px;color:#3a3a3a;letter-spacing:0.82px;width:265px;overflow:hidden;padding-bottom:4px;">00000163.email</div>
<div class="t" style="left:1267px;top:481.7px;font-size:13px;color:#3a3a3a;letter-spacing:0.68px;">msg</div>
<div class="t" style="left:1417px;top:481.7px;font-size:13px;color:#3a3a3a;letter-spacing:0.81px;">10/18/2001 10:21 PM</div>
<div class="a" style="left:0px;top:546px;width:1609px;height:1px;background:#eff2f4"></div>
<div class="t" style="left:258.5px;top:520.7px;font-size:13px;color:#3a3a3a;letter-spacing:0.34px;">English 99%</div>
<div class="t" style="left:981px;top:520.7px;font-size:13px;color:#3a3a3a;letter-spacing:0.82px;width:265px;overflow:hidden;padding-bottom:4px;">00000169.email</div>
<div class="t" style="left:1267px;top:520.7px;font-size:13px;color:#3a3a3a;letter-spacing:0.68px;">msg</div>
<div class="t" style="left:1417px;top:520.7px;font-size:13px;color:#3a3a3a;letter-spacing:0.81px;">10/25/2001 6:30 PM</div>
<div class="a" style="left:0px;top:585px;width:1609px;height:1px;background:#eff2f4"></div>
<div class="t" style="left:258.5px;top:559.7px;font-size:13px;color:#3a3a3a;letter-spacing:0.34px;">English 99%</div>
<div class="t" style="left:981px;top:559.7px;font-size:13px;color:#3a3a3a;letter-spacing:0.82px;width:265px;overflow:hidden;padding-bottom:4px;">00000173.email</div>
<div class="t" style="left:1267px;top:559.7px;font-size:13px;color:#3a3a3a;letter-spacing:0.68px;">msg</div>
<div class="t" style="left:1417px;top:559.7px;font-size:13px;color:#3a3a3a;letter-spacing:0.81px;">11/21/2001 4:43 PM</div>
<div class="a" style="left:0px;top:624px;width:1609px;height:1px;background:#eff2f4"></div>
<div class="t" style="left:258.5px;top:598.7px;font-size:13px;color:#3a3a3a;letter-spacing:0.34px;">English 99%</div>
<div class="t" style="left:531px;top:598.7px;font-size:13px;color:#3a3a3a;letter-spacing:0.5px;">Allen, Philip</div>
<div class="t" style="left:681px;top:598.7px;font-size:13px;color:#3a3a3a;letter-spacing:0.45px;">ATTACHMENT</div>
<div class="t" style="left:831px;top:598.7px;font-size:13px;color:#3a3a3a;letter-spacing:0.45px;">WINWORD2000</div>
<div class="t" style="left:981px;top:598.7px;font-size:13px;color:#3a3a3a;letter-spacing:0.82px;width:265px;overflow:hidden;padding-bottom:4px;">Org Structure Topic_V1.doc</div>
<div class="t" style="left:1267px;top:598.7px;font-size:13px;color:#3a3a3a;letter-spacing:0.68px;">doc</div>
<div class="t" style="left:1417px;top:598.7px;font-size:13px;color:#3a3a3a;letter-spacing:0.81px;">11/21/2001 4:43 PM</div>
<div class="t" style="left:1567px;top:598.7px;font-size:13px;color:#3a3a3a;letter-spacing:0.5px;width:42px;overflow:hidden;padding-bottom:4px;">Sheri_</div>
<div class="a" style="left:0px;top:663px;width:1609px;height:1px;background:#eff2f4"></div>
<div class="t" style="left:258.5px;top:637.7px;font-size:13px;color:#3a3a3a;letter-spacing:0.34px;">English 99%</div>
<div class="t" style="left:531px;top:637.7px;font-size:13px;color:#3a3a3a;letter-spacing:0.5px;">Allen, Philip</div>
<div class="t" style="left:681px;top:637.7px;font-size:13px;color:#3a3a3a;letter-spacing:0.45px;">EMAIL</div>
<div class="t" style="left:831px;top:637.7px;font-size:13px;color:#3a3a3a;letter-spacing:0.45px;">OUTLOOK_MSG</div>
<div class="t" style="left:981px;top:637.7px;font-size:13px;color:#3a3a3a;letter-spacing:0.82px;width:265px;overflow:hidden;padding-bottom:4px;">00000174.email</div>
<div class="t" style="left:1267px;top:637.7px;font-size:13px;color:#3a3a3a;letter-spacing:0.68px;">msg</div>
<div class="t" style="left:1417px;top:637.7px;font-size:13px;color:#3a3a3a;letter-spacing:0.81px;">11/24/2001 4:33 PM</div>
<div class="a" style="left:0px;top:702px;width:1609px;height:1px;background:#eff2f4"></div>
<div class="t" style="left:258.5px;top:676.7px;font-size:13px;color:#3a3a3a;letter-spacing:0.34px;">English 99%</div>
<div class="t" style="left:531px;top:676.7px;font-size:13px;color:#3a3a3a;letter-spacing:0.5px;">Allen, Philip</div>
<div class="t" style="left:681px;top:676.7px;font-size:13px;color:#3a3a3a;letter-spacing:0.45px;">ATTACHMENT</div>
<div class="t" style="left:831px;top:676.7px;font-size:13px;color:#3a3a3a;letter-spacing:0.45px;">WINWORD97</div>
<div class="t" style="left:981px;top:676.7px;font-size:13px;color:#3a3a3a;letter-spacing:0.82px;width:265px;overflow:hidden;padding-bottom:4px;">Org Structure Topic_V1.doc Kirk Comment.</div>
<div class="t" style="left:1267px;top:676.7px;font-size:13px;color:#3a3a3a;letter-spacing:0.68px;">doc</div>
<div class="t" style="left:1417px;top:676.7px;font-size:13px;color:#3a3a3a;letter-spacing:0.81px;">11/24/2001 4:33 PM</div>
<div class="t" style="left:1567px;top:676.7px;font-size:13px;color:#3a3a3a;letter-spacing:0.5px;width:42px;overflow:hidden;padding-bottom:4px;">kmcda</div>
</div>
<svg style="left:284px;top:1055px" width="13" height="10" viewBox="0 0 13 10"><path d="M0 0H2V10H0Z M7.5 0V10L2.5 5Z M12.5 0V10L7.5 5Z" fill="#3f55c4"/></svg>
<svg style="left:318px;top:1056px" width="6" height="8" viewBox="0 0 6 8"><path d="M6 0V8L0 4Z" fill="#3f55c4"/></svg>
<div class="t" style="left:343px;top:1054.0px;font-size:13px;color:#111;font-weight:700;">1</div>
<div class="t" style="left:362px;top:1054.0px;font-size:13px;color:#333;letter-spacing:0.5px;">2</div>
<div class="t" style="left:386.5px;top:1054.0px;font-size:13px;color:#333;letter-spacing:0.5px;">3</div>
<div class="t" style="left:406px;top:1054.0px;font-size:13px;color:#333;letter-spacing:0.5px;">4</div>
<div class="t" style="left:429.5px;top:1054.0px;font-size:13px;color:#333;letter-spacing:0.5px;">5</div>
<div class="t" style="left:451px;top:1054.0px;font-size:13px;color:#333;letter-spacing:0.5px;">6</div>
<div class="t" style="left:474.5px;top:1054.0px;font-size:13px;color:#333;letter-spacing:0.5px;">7</div>
<div class="t" style="left:496.5px;top:1054.0px;font-size:13px;color:#333;letter-spacing:0.5px;">8</div>
<div class="t" style="left:517px;top:1054.0px;font-size:13px;color:#333;letter-spacing:0.5px;">9</div>
<div class="t" style="left:539.5px;top:1054.0px;font-size:13px;color:#333;letter-spacing:0.5px;">10</div>
<svg style="left:597px;top:1056px" width="6" height="8" viewBox="0 0 6 8"><path d="M0 0V8L6 4Z" fill="#3f55c4"/></svg>
<svg style="left:623px;top:1055px" width="13" height="10" viewBox="0 0 13 10"><path d="M0 0V10L5 5Z M5 0V10L10 5Z M11 0H13V10H11Z" fill="#3f55c4"/></svg>
<div class="a" style="left:1653px;top:1047px;width:55px;height:28px;border:1px solid #e6e6e6;border-radius:4px"></div>
<div class="t" style="left:1678px;top:1054.0px;font-size:13px;color:#333;">1</div>
<div class="t" style="left:1715px;top:1054.0px;font-size:13px;color:#333;letter-spacing:0.55px;">of 814</div>
<div class="t" style="left:1777px;top:1054.0px;font-size:13px;color:#333;letter-spacing:0.55px;">25 per page</div>
<svg style="left:1873px;top:1058px" width="8" height="6" viewBox="0 0 8 6"><path d="M0 0H7.5L3.75 6Z" fill="#222"/></svg>
<div class="a" style="left:667px;top:334px;width:580px;height:600px;background:#fff;border-radius:6px;box-shadow:0 14px 22px -6px rgba(40,60,95,0.38),0 0 4px rgba(40,55,85,0.08)"></div>
<svg style="left:680px;top:344px" width="21" height="21" viewBox="0 0 21 21"><path d="M0.7 0.7H20.3L12.4 9.8V20.3L8.6 17.6V9.8Z" fill="none" stroke="#a0485f" stroke-width="1.25" stroke-linejoin="round"/></svg>
<div class="t" style="left:712px;top:345.9px;font-size:19px;color:#1c1f3a;letter-spacing:0.8px;">Filter Custodian</div>
<svg style="left:1221px;top:348px" width="13" height="12" viewBox="0 0 13 12"><path d="M0.8 0.6L12.2 11.4M12.2 0.6L0.8 11.4" stroke="#8a8a8a" stroke-width="1.9"/></svg>
<div class="a" style="left:675px;top:381px;width:270px;height:30px;border:1px solid #e8e8ea;border-radius:5px"></div>
<div class="t" style="left:686.5px;top:390.1px;font-size:12.5px;color:#333;letter-spacing:0.45px;">Has any</div>
<svg style="left:926px;top:393px" width="8" height="6" viewBox="0 0 8 6"><path d="M0 0H7.5L3.75 6Z" fill="#111"/></svg>
<div class="a" style="left:675px;top:419px;width:272px;height:27px;border:1px solid #ececee;border-radius:5px"></div>
<div class="t" style="left:684px;top:426.8px;font-size:12.5px;color:#a8a8a8;letter-spacing:0.45px;font-style:italic;">Find value...</div>
<svg style="left:923px;top:426px" width="16" height="14" viewBox="0 0 16 14"><path d="M1 13V7L3 1H6.5V5H9.5V1H13L15 7V13H9.5V8.5H6.5V13Z" fill="none" stroke="#8a8a8a" stroke-width="1.1" stroke-linejoin="round"/><path d="M1 9.5H6.5M9.5 9.5H15" stroke="#8a8a8a" stroke-width="1"/></svg>
<div class="t" style="left:675px;top:465.9px;font-size:12.8px;color:#444;letter-spacing:0.55px;">Select values to include in results</div>
<svg style="left:1073px;top:465px" width="14" height="14" viewBox="0 0 14 14"><path d="M0.6 6.6V13.4H13.4V6.6H10L8.5 9.2H5.5L4 6.6Z" fill="none" stroke="#6a76c4" stroke-width="1.1" stroke-linejoin="round"/><path d="M7 0V7.2M4.5 4.8L7 7.2L9.5 4.8" fill="none" stroke="#6a76c4" stroke-width="1.1"/></svg>
<div class="t" style="left:1092px;top:466.4px;font-size:12.5px;color:#555;letter-spacing:0.3px;">Export</div>
<div class="a" style="left:1149px;top:460px;width:1px;height:24px;background:#ddd"></div>
<div class="t" style="left:1165px;top:465.9px;font-size:13px;color:#222;letter-spacing:0.85px;"><b>1-10</b> of <b>139</b></div>
<div class="a" style="left:675px;top:497px;width:564px;height:25px;background:#f4f4f4"></div>
<div class="cb" style="left:692px;top:505px"></div>
<div class="t" style="left:734.5px;top:504.2px;font-size:12.5px;color:#111;letter-spacing:0.65px;font-weight:700;">Available Values</div>
<div class="t" style="left:1175px;top:504.2px;font-size:12.5px;color:#111;letter-spacing:0.3px;font-weight:700;">Count</div>
<div class="cb" style="left:692px;top:534px"></div>
<div class="t" style="left:734.5px;top:534.7px;font-size:13px;color:#3a3a3a;letter-spacing:0.47px;">Allen, Philip</div>
<div class="t" style="left:1114px;top:534.7px;font-size:13px;color:#3a3a3a;letter-spacing:0.6px;width:100px;text-align:right;">229</div>
<div class="a" style="left:675px;top:560px;width:552px;height:1px;background:#eef0f3"></div>
<div class="cb" style="left:692px;top:573px"></div>
<div class="t" style="left:734.5px;top:573.7px;font-size:13px;color:#3a3a3a;letter-spacing:0.47px;">Arora, Harpreet</div>
<div class="t" style="left:1114px;top:573.7px;font-size:13px;color:#3a3a3a;letter-spacing:0.6px;width:100px;text-align:right;">60</div>
<div class="a" style="left:675px;top:599px;width:552px;height:1px;background:#eef0f3"></div>
<div class="cb" style="left:692px;top:612px"></div>
<div class="t" style="left:734.5px;top:612.7px;font-size:13px;color:#3a3a3a;letter-spacing:0.47px;">Badeer, Robert</div>
<div class="t" style="left:1114px;top:612.7px;font-size:13px;color:#3a3a3a;letter-spacing:0.6px;width:100px;text-align:right;">7</div>
<div class="a" style="left:675px;top:638px;width:552px;height:1px;background:#eef0f3"></div>
<div class="cb" style="left:692px;top:651px"></div>
<div class="t" style="left:734.5px;top:651.7px;font-size:13px;color:#3a3a3a;letter-spacing:0.47px;">Bailey, Susan</div>
<div class="t" style="left:1114px;top:651.7px;font-size:13px;color:#3a3a3a;letter-spacing:0.6px;width:100px;text-align:right;">33</div>
<div class="a" style="left:675px;top:677px;width:552px;height:1px;background:#eef0f3"></div>
<div class="cb" style="left:692px;top:690px"></div>
<div class="t" style="left:734.5px;top:690.7px;font-size:13px;color:#3a3a3a;letter-spacing:0.47px;">Baughman, Don</div>
<div class="t" style="left:1114px;top:690.7px;font-size:13px;color:#3a3a3a;letter-spacing:0.6px;width:100px;text-align:right;">153</div>
<div class="a" style="left:675px;top:716px;width:552px;height:1px;background:#eef0f3"></div>
<div class="cb" style="left:692px;top:729px"></div>
<div class="t" style="left:734.5px;top:729.7px;font-size:13px;color:#3a3a3a;letter-spacing:0.47px;">Beck, Sally</div>
<div class="t" style="left:1114px;top:729.7px;font-size:13px;color:#3a3a3a;letter-spacing:0.6px;width:100px;text-align:right;">898</div>
<div class="a" style="left:675px;top:755px;width:552px;height:1px;background:#eef0f3"></div>
<div class="cb" style="left:692px;top:768px"></div>
<div class="t" style="left:734.5px;top:768.7px;font-size:13px;color:#3a3a3a;letter-spacing:0.47px;">Benson, Robert</div>
<div class="t" style="left:1114px;top:768.7px;font-size:13px;color:#3a3a3a;letter-spacing:0.6px;width:100px;text-align:right;">49</div>
<div class="a" style="left:675px;top:794px;width:552px;height:1px;background:#eef0f3"></div>
<div class="cb" style="left:692px;top:807px"></div>
<div class="t" style="left:734.5px;top:807.7px;font-size:13px;color:#3a3a3a;letter-spacing:0.47px;">Blair, Lynn</div>
<div class="t" style="left:1114px;top:807.7px;font-size:13px;color:#3a3a3a;letter-spacing:0.6px;width:100px;text-align:right;">89</div>
<div class="a" style="left:675px;top:833px;width:552px;height:1px;background:#eef0f3"></div>
<svg style="left:687px;top:860px" width="13" height="9" viewBox="0 0 13 9"><path d="M0 0H2V9H0Z M7.5 0V9L2.5 4.5Z M12.5 0V9L7.5 4.5Z" fill="#3f55c4"/></svg>
<svg style="left:720px;top:861px" width="6" height="8" viewBox="0 0 6 8"><path d="M6 0V8L0 4Z" fill="#3f55c4"/></svg>
<div class="t" style="left:744.5px;top:859.0px;font-size:13px;color:#111;font-weight:700;">1</div>
<div class="t" style="left:765px;top:859.0px;font-size:13px;color:#333;letter-spacing:0.5px;">2</div>
<div class="t" style="left:787px;top:859.0px;font-size:13px;color:#333;letter-spacing:0.5px;">3</div>
<div class="t" style="left:809px;top:859.0px;font-size:13px;color:#333;letter-spacing:0.5px;">4</div>
<div class="t" style="left:831px;top:859.0px;font-size:13px;color:#333;letter-spacing:0.5px;">5</div>
<div class="t" style="left:853px;top:859.0px;font-size:13px;color:#333;letter-spacing:0.5px;">...</div>
<svg style="left:882px;top:861px" width="6" height="8" viewBox="0 0 6 8"><path d="M0 0V8L6 4Z" fill="#3f55c4"/></svg>
<svg style="left:909px;top:860px" width="13" height="9" viewBox="0 0 13 9"><path d="M0 0V9L5 4.5Z M5 0V9L10 4.5Z M11 0H13V9H11Z" fill="#3f55c4"/></svg>
<div class="a" style="left:1017px;top:850px;width:46px;height:28px;border:1px solid #ececec;border-radius:4px"></div>
<div class="t" style="left:1037px;top:857.8px;font-size:13px;color:#333;">1</div>
<div class="t" style="left:1069.5px;top:857.8px;font-size:13px;color:#333;letter-spacing:0.55px;">of 14</div>
<div class="t" style="left:1124px;top:857.8px;font-size:13px;color:#333;letter-spacing:0.55px;">10 per page</div>
<svg style="left:1217px;top:861px" width="8" height="6" viewBox="0 0 8 6"><path d="M0 0H7.5L3.75 6Z" fill="#111"/></svg>
<div class="t" style="left:1071.5px;top:895.0px;font-size:15px;color:#5d6b97;letter-spacing:0.55px;">Cancel</div>
<div class="a" style="left:1142px;top:882px;width:92px;height:39px;background:#dba4af;border-radius:5px"></div>
<div class="t" style="left:1164px;top:896.2px;font-size:13.5px;color:#fff;letter-spacing:0.85px;font-weight:700;">FILTER</div>
<svg style="left:846px;top:573px" width="13" height="19" viewBox="0 0 13 19"><path d="M3 2.5V14L5.8 11.5L8.8 18L11.6 16.8L8.8 10.6H13Z" fill="rgba(40,55,80,0.35)" style="filter:blur(1.5px)"/><path d="M1 0.8V12.8L3.8 10.3L6.5 16.6L9.3 15.4L6.6 9.4H10.4Z" fill="#000" stroke="#fff" stroke-width="0.9" stroke-linejoin="miter"/></svg>
<div class="a" style="left:0px;top:1019px;width:1910px;height:45px;background:linear-gradient(to bottom,rgba(20,30,50,0) 0%,rgba(20,30,50,0.18) 22%,rgba(20,30,50,0.5) 48%,rgba(20,30,50,0.3) 72%,rgba(20,30,50,0.05) 100%)"></div>
<div class="a" style="left:13px;top:1034px;width:5px;height:15px;background:#fff"></div>
<div class="a" style="left:21px;top:1034px;width:5px;height:15px;background:#fff"></div>
<div class="a" style="left:47px;top:1040px;width:1680px;height:3px;background:rgba(120,135,160,0.75);border-radius:2px"></div>
<div class="a" style="left:47px;top:1040px;width:435px;height:5px;background:#fff;border-radius:3px"></div>
<div class="a" style="left:281px;top:1036px;width:13px;height:13px;background:#fff;border-radius:50%"></div>
<div class="t" style="left:1747px;top:1034.6px;font-size:14px;color:#fff;letter-spacing:-0.3px;">-2:13</div>
<svg style="left:1796px;top:1033px" width="18" height="17" viewBox="0 0 18 17"><path d="M0 5H4L9 0.5V16.5L4 12H0Z" fill="#fff"/><path d="M11.5 3.5A6 6 0 0 1 11.5 13.5" fill="none" stroke="#fff" stroke-width="2"/></svg>
<svg style="left:1840px;top:1032px" width="19" height="19" viewBox="0 0 19 19"><g fill="#fff"><circle cx="9.5" cy="9.5" r="6.3"/><rect x="7.7" y="0" width="3.6" height="19" rx="1"/><rect x="7.7" y="0" width="3.6" height="19" rx="1" transform="rotate(45 9.5 9.5)"/><rect x="7.7" y="0" width="3.6" height="19" rx="1" transform="rotate(90 9.5 9.5)"/><rect x="7.7" y="0" width="3.6" height="19" rx="1" transform="rotate(135 9.5 9.5)"/></g><circle cx="9.5" cy="9.5" r="2.8" fill="#9aa1aa"/></svg>
<svg style="left:1885px;top:1033px" width="18" height="17" viewBox="0 0 18 17"><path d="M5.5 0V5.5H0M12.5 0V5.5H18M5.5 17V11.5H0M12.5 17V11.5H18" fill="none" stroke="#fff" stroke-width="2.8"/></svg>
</body></html>
